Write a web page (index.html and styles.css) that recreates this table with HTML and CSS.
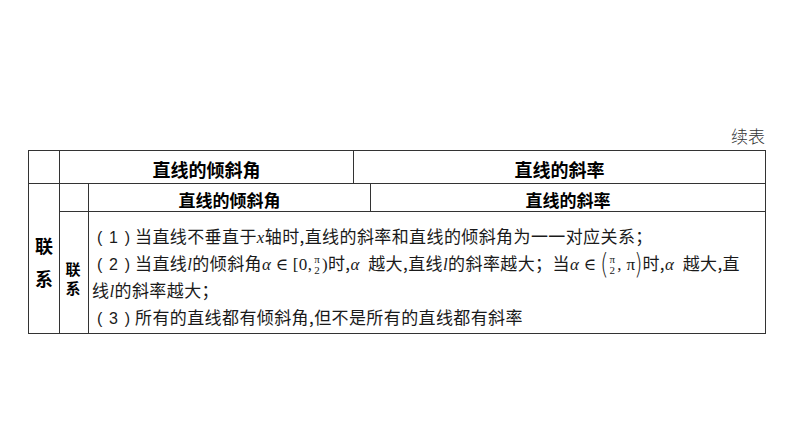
FILE: index.html
```html
<!DOCTYPE html>
<html lang="zh-CN">
<head>
<meta charset="utf-8">
<title>续表</title>
<link rel="stylesheet" href="styles.css">
</head>
<body>
<div class="page">
  <div class="caption">续表</div>
  <div class="table">
    <div class="cell"></div>
    <div class="cell head">直线的倾斜角</div>
    <div class="cell head">直线的斜率</div>
    <div class="cell side"><span>联</span><span>系</span></div>
    <div class="inner-wrap">
      <div class="inner">
        <div class="cell"></div>
        <div class="cell subhead">直线的倾斜角</div>
        <div class="cell subhead">直线的斜率</div>
        <div class="cell side2"><span>联</span><span>系</span></div>
        <div class="cell content">
          <div class="line"><span class="num"><span>(</span><span>1</span><span>)</span></span>当直线不垂直于<i class="m">x</i>轴时,直线的斜率和直线的倾斜角为一一对应关系；</div>
          <div class="line"><span class="num"><span>(</span><span>2</span><span>)</span></span>当直线<i class="m">l</i>的倾斜角<i class="m">α</i> <span class="m">∈</span> <span class="m">[0,</span><span class="frac"><span>π</span><span>2</span></span><span class="m">)</span>时,<i class="m">α</i>&nbsp;&nbsp;越大,直线<i class="m">l</i>的斜率越大；当<i class="m">α</i> <span class="m">∈</span> <span class="big">(</span><span class="frac"><span>π</span><span>2</span></span><span class="m">, π</span><span class="big">)</span>时,<i class="m">α</i>&nbsp;&nbsp;越大,直</div>
          <div class="line">线<i class="m">l</i>的斜率越大；</div>
          <div class="line"><span class="num"><span>(</span><span>3</span><span>)</span></span>所有的直线都有倾斜角,但不是所有的直线都有斜率</div>
        </div>
      </div>
    </div>
  </div>
</div>
</body>
</html>
```

FILE: styles.css
```css
body {
  margin: 0;
  background: #fff;
  color: #111;
  font-family: "Noto Sans CJK SC", "Noto Sans", sans-serif;
}

.page {
  width: 738px;
  padding: 122px 0 0 28px;
}

.caption {
  text-align: right;
  padding-right: 1px;
  font-size: 17px;
  line-height: 28px;
  font-weight: 300;
  color: #333;
}

.table {
  display: grid;
  grid-template-columns: 30px 293px 411px;
  grid-template-rows: 32px 149px;
  gap: 1px;
  padding: 1px;
  background: #333;
}

.cell {
  background: #fff;
}

.inner-wrap {
  grid-column: 2 / 4;
  background: #333;
}

.inner {
  display: grid;
  grid-template-columns: 28px 281px 394px;
  grid-template-rows: 27px 121px;
  gap: 1px;
  height: 100%;
}

.head {
  display: flex;
  align-items: center;
  justify-content: center;
  padding-top: 4px;
  font-size: 18px;
  font-weight: 700;
  line-height: 24px;
  color: #000;
}

.subhead {
  display: flex;
  align-items: center;
  justify-content: center;
  padding-top: 4px;
  font-size: 17px;
  font-weight: 700;
  line-height: 22px;
  color: #000;
}

.side {
  display: flex;
  flex-direction: column;
  align-items: center;
  justify-content: center;
  padding-top: 6px;
  font-size: 18px;
  font-weight: 700;
  line-height: 33px;
  color: #000;
}

.side2 {
  display: flex;
  flex-direction: column;
  align-items: center;
  justify-content: center;
  padding: 10px 2px 0 0;
  font-size: 15px;
  font-weight: 700;
  line-height: 19px;
  color: #000;
}

.content {
  grid-column: 2 / 4;
  padding: 10px 0 0 3px;
  font-size: 17px;
  line-height: 27px;
  letter-spacing: 0.4px;
  color: #1a1a1a;
}

.line {
  white-space: nowrap;
  height: 27px;
}

.num {
  display: inline-flex;
  justify-content: space-between;
  width: 33px;
  margin: 0 5px 0 5px;
  font-family: "Liberation Sans", sans-serif;
  font-size: 16px;
  letter-spacing: 0;
}

.m {
  font-family: "Liberation Serif", "DejaVu Serif", serif;
  font-style: normal;
}

i.m {
  font-style: italic;
}

.frac {
  display: inline-flex;
  flex-direction: column;
  align-items: center;
  vertical-align: middle;
  margin: 0 2px;
  font-family: "Liberation Serif", "DejaVu Serif", serif;
  font-size: 11px;
  line-height: 11px;
  letter-spacing: 0;
}

.big {
  display: inline-block;
  margin: 0 -2px;
  font-family: "DejaVu Sans", sans-serif;
  font-weight: 300;
  font-size: 28px;
  line-height: 0;
  letter-spacing: 0;
  vertical-align: -4px;
  transform: scaleX(0.75);
}
```
